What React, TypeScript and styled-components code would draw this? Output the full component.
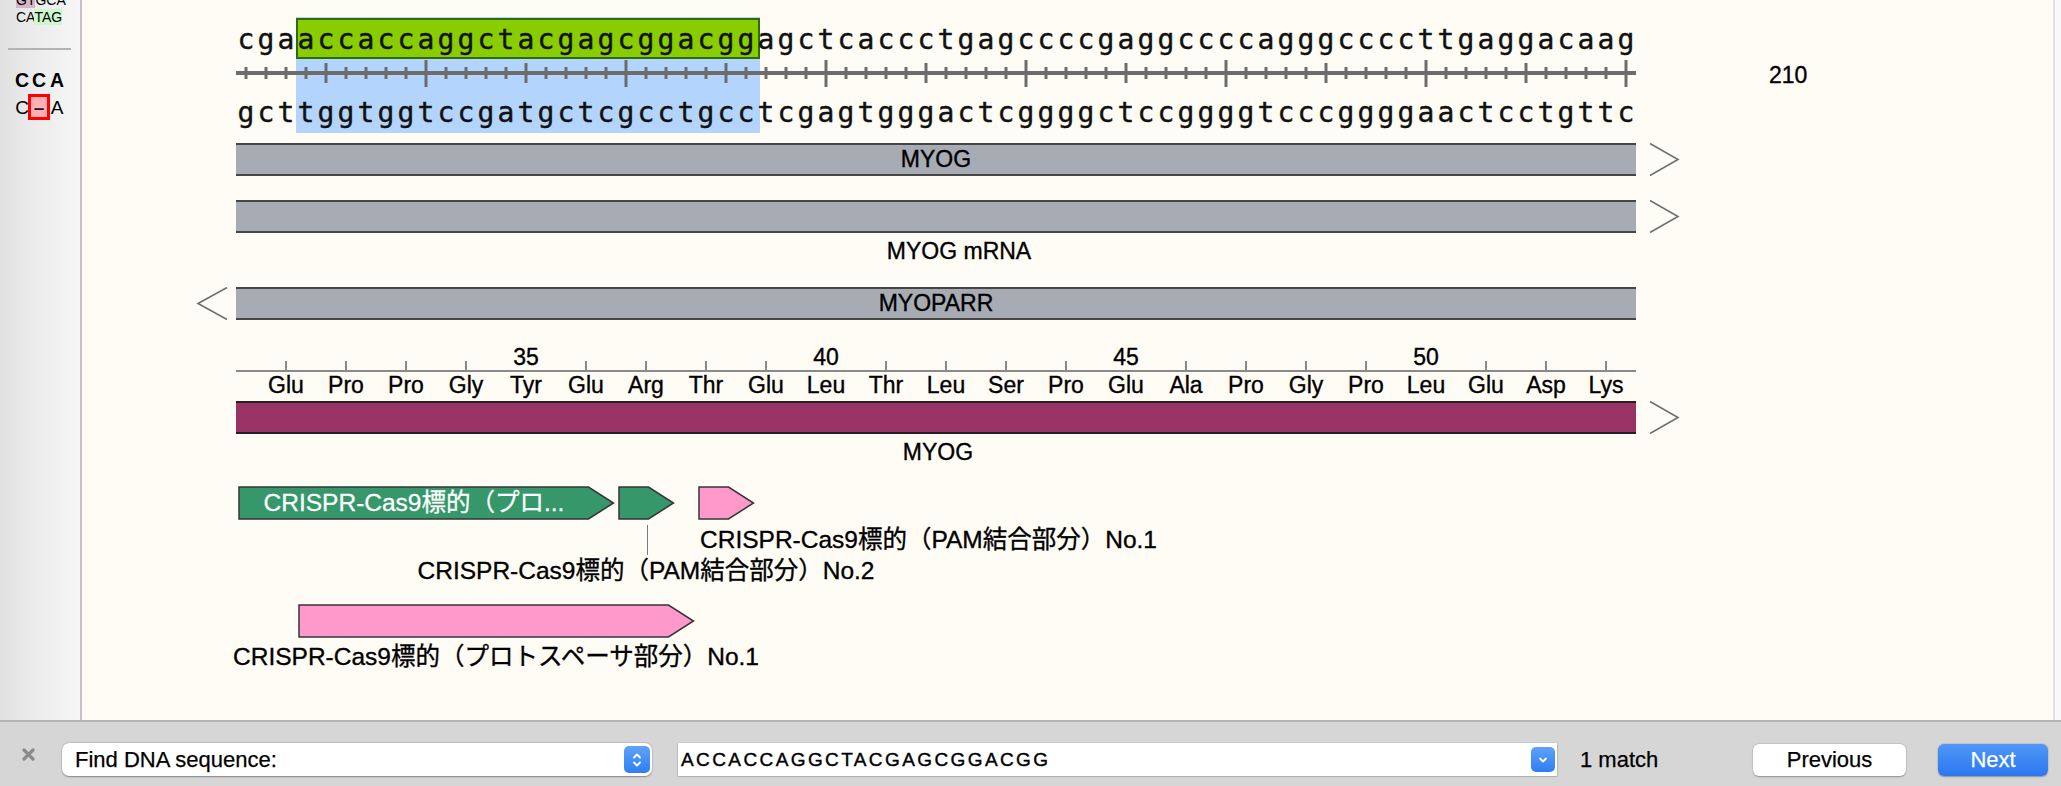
import React from "react";
import styled, { createGlobalStyle } from "styled-components";

const GlobalStyle = createGlobalStyle`
  html, body { margin: 0; padding: 0; overflow: hidden; background: #d6d6d6; }
  body { font-family: "Liberation Sans", Arial, "Noto Sans CJK JP", sans-serif; }
  *, *::before, *::after { box-sizing: border-box; }
`;

const CELL = 20;
const SEQ_TOP = "cgaaccaccaggctacgagcggacggagctcaccctgagccccgaggccccagggccccttgaggacaag";
const COMP: Record<string, string> = { a: "t", t: "a", g: "c", c: "g" };
const SEQ_BOTTOM = SEQ_TOP.split("").map((c) => COMP[c]).join("");
const FIRST_POS = 141;
const MATCH = { start: 3, len: 23 };
const AAS = ["Glu","Pro","Pro","Gly","Tyr","Glu","Arg","Thr","Glu","Leu","Thr","Leu","Ser","Pro","Glu","Ala","Pro","Gly","Pro","Leu","Glu","Asp","Lys"];
const FIRST_AA = 31;
const LABEL_FONT = `"Liberation Sans", Arial, "Noto Sans CJK JP", sans-serif`;

/* ---------- frame ---------- */
const Window = styled.div`
  width: 2061px;
  height: 786px;
  display: grid;
  grid-template-rows: 720px 66px;
  background: #fffcf5;
`;
const Workspace = styled.div`
  display: flex;
  min-height: 0;
  overflow: hidden;
`;

/* ---------- sidebar ---------- */
const Sidebar = styled.aside`
  width: 82px;
  flex: none;
  padding-left: 16px;
  border-right: 2px solid #c3c3c3;
  background: linear-gradient(to right, #e1e1e1 0%, #ececec 45%, #f6f6f6 100%);
  overflow: hidden;
  font-family: "Liberation Sans", Arial, sans-serif;
  color: #000;
`;
const SideSeq = styled.div`
  margin-top: -8px;
  font-size: 14px;
  line-height: 17px;
  white-space: nowrap;
`;
const SideLine = styled.div``;
const Hl = styled.span<{ $c: string }>`
  background: ${(p) => p.$c};
`;
const SideRule = styled.div`
  margin: 22px 0 0 -8px;
  width: 63px;
  height: 2px;
  background: #b3b3b3;
`;
const AlignGrid = styled.div`
  margin-top: 20px;
  display: grid;
  grid-template-columns: 12px 22px 14px;
  grid-template-rows: 22px 26px;
  row-gap: 2px;
`;
const AlignCell = styled.div<{ $bold?: boolean; $gap?: boolean }>`
  display: flex;
  align-items: center;
  justify-content: center;
  font-size: ${(p) => (p.$bold ? "19.5px" : "19px")};
  font-weight: ${(p) => (p.$bold ? 700 : 400)};
  line-height: 1;
  color: #000;
  ${(p) => (p.$gap ? "border: 3px solid #ff0000; background: #ffb0b7; color: #1a1a1a; font-weight: 700;" : "")}
`;

/* ---------- canvas ---------- */
const Canvas = styled.main`
  flex: 1;
  min-width: 0;
  padding-left: 154px;
  display: flex;
  flex-direction: column;
  align-items: flex-start;
  overflow: hidden;
  background: #fffcf5;
  font-family: ${LABEL_FONT};
  font-size: 23px;
  color: #000;
  -webkit-text-stroke: 0.35px currentColor;
`;
const ScrollTrack = styled.div`
  width: 8px;
  flex: none;
  border-left: 2px solid #e2e2e2;
  background: #f8f8f8;
`;

const SeqBlock = styled.section`
  position: relative;
  width: 1400px;
  flex: none;
  margin-top: 23px;
`;
const MatchShade = styled.div<{ $start: number; $len: number }>`
  position: absolute;
  top: -6px;
  height: 116px;
  left: ${(p) => p.$start * CELL}px;
  width: ${(p) => p.$len * CELL + 4}px;
  background: #b3d4fc;
`;
const MatchBox = styled.div<{ $start: number; $len: number }>`
  position: absolute;
  top: -5px;
  height: 41px;
  left: ${(p) => p.$start * CELL}px;
  width: ${(p) => p.$len * CELL + 4}px;
  background: #89cc00;
  border: 2px solid #2e6b0b;
`;
const SeqRow = styled.div`
  position: relative;
  display: flex;
  height: 33px;
`;
const Base = styled.span`
  width: ${CELL}px;
  flex: none;
  text-align: center;
  font-family: "DejaVu Sans Mono", "Liberation Mono", monospace;
  font-size: 28px;
  line-height: 33px;
  color: #111;
  -webkit-text-stroke: 0.4px #111;
`;
const RulerRow = styled.div`
  position: relative;
  display: flex;
  height: 40px;
`;
const RulerSvg = styled.svg`
  flex: none;
  display: block;
`;
const PosLabel = styled.span`
  margin: 6px 0 0 133px;
  font-size: 23px;
  line-height: 26px;
  white-space: nowrap;
`;

const Track = styled.div<{ $mt: number }>`
  display: flex;
  flex: none;
  height: 33px;
  margin-top: ${(p) => p.$mt}px;
  margin-left: -40px;
`;
const ArrowSlot = styled.div<{ $w: number }>`
  width: ${(p) => p.$w}px;
  flex: none;
  display: flex;
`;
const FeatureBar = styled.div<{ $fill: string; $edge: string }>`
  width: 1400px;
  flex: none;
  height: 33px;
  background: ${(p) => p.$fill};
  border-top: 2px solid ${(p) => p.$edge};
  border-bottom: 2px solid ${(p) => p.$edge};
  display: flex;
  align-items: center;
  justify-content: center;
  font-size: 23px;
  line-height: 1;
  color: #000;
`;
const Caption = styled.div<{ $mt: number; $shift?: number }>`
  width: 1400px;
  flex: none;
  margin-top: ${(p) => p.$mt}px;
  padding-left: ${(p) => p.$shift ?? 0}px;
  text-align: center;
  font-size: 23px;
  line-height: 26px;
  white-space: nowrap;
`;

const AaRuler = styled.div`
  width: 1400px;
  flex: none;
  height: 27px;
  margin-top: 25px;
  padding-left: ${CELL}px;
  border-bottom: 2px solid #8a8a8a;
  display: flex;
`;
const AaRow = styled.div`
  width: 1400px;
  flex: none;
  height: 26px;
  padding-left: ${CELL}px;
  display: flex;
`;
const AaCell = styled.div`
  width: ${CELL * 3}px;
  flex: none;
  display: flex;
  justify-content: center;
  align-items: flex-end;
  font-size: 23px;
  line-height: 25px;
  white-space: nowrap;
`;
const AaTick = styled.span`
  width: 2px;
  height: 9px;
  background: #8a8a8a;
`;

const Lane = styled.div`
  flex: none;
  margin-top: 21px;
  display: grid;
  grid-template-columns: repeat(70, ${CELL}px);
  grid-template-rows: 34px 35px 31px 18px 34px 32px;
`;
const ArrowBox = styled.div<{ $from: number; $to: number; $row: number }>`
  grid-column: ${(p) => p.$from + 1} / ${(p) => p.$to + 2};
  grid-row: ${(p) => p.$row};
  position: relative;
  display: flex;
  align-items: center;
  justify-content: center;
  padding: 0 28px 0 4px;
  min-width: 0;
`;
const ArrowShape = styled.svg`
  position: absolute;
  left: 0;
  top: 0;
  overflow: visible;
`;
const ArrowText = styled.span`
  position: relative;
  color: #fff;
  font-size: 24.5px;
  line-height: 1;
  white-space: nowrap;
  -webkit-text-stroke: 0.3px #fff;
`;
const LaneLabel = styled.div<{ $from: number; $to: number; $row: number; $mt: number; $start?: boolean }>`
  grid-column: ${(p) => p.$from + 1} / ${(p) => p.$to + 2};
  grid-row: ${(p) => p.$row};
  min-width: 0;
  margin-top: ${(p) => p.$mt}px;
  padding-left: ${(p) => (p.$start ? 4 : 0)}px;
  display: flex;
  justify-content: ${(p) => (p.$start ? "flex-start" : "center")};
  font-size: 24.5px;
  line-height: 26px;
  height: 26px;
  white-space: nowrap;
  & > span { flex: none; }
`;
const Leader = styled.div<{ $from: number; $to: number; $row: number }>`
  grid-column: ${(p) => p.$from + 1} / ${(p) => p.$to + 2};
  grid-row: ${(p) => p.$row};
  justify-self: center;
  margin: 5px 0 0 3px;
  width: 1px;
  height: 30px;
  background: #7a7a7a;
`;

/* ---------- find bar ---------- */
const FindBar = styled.footer`
  display: flex;
  align-items: center;
  padding: 11px 13px 0 22px;
  border-top: 2px solid #b4b4b4;
  background: #d6d6d6;
  font-family: "Liberation Sans", Arial, sans-serif;
  font-size: 22px;
  color: #000;
  -webkit-text-stroke: 0.25px currentColor;
`;
const CloseGlyph = styled.svg`
  flex: none;
  margin-bottom: 11px;
`;
const PopUp = styled.div`
  margin-left: 27px;
  width: 590px;
  height: 33px;
  flex: none;
  display: flex;
  align-items: center;
  padding: 0 2px 0 13px;
  border-radius: 7px;
  background: #fff;
  box-shadow: 0 0.5px 1.5px rgba(0, 0, 0, 0.35), 0 0 0 0.5px rgba(0, 0, 0, 0.08);
`;
const PopText = styled.span`
  flex: 1;
  white-space: nowrap;
`;
const BlueKnob = styled.span<{ $w: number; $h: number }>`
  width: ${(p) => p.$w}px;
  height: ${(p) => p.$h}px;
  flex: none;
  border-radius: 5px;
  background: linear-gradient(#5ea3f8, #2f7ef2);
  display: flex;
  align-items: center;
  justify-content: center;
`;
const Combo = styled.div`
  margin-left: 26px;
  width: 879px;
  height: 33px;
  flex: none;
  display: flex;
  align-items: center;
  padding: 0 2px 0 3px;
  background: #fff;
  box-shadow: 0 0.5px 1.5px rgba(0, 0, 0, 0.35), 0 0 0 0.5px rgba(0, 0, 0, 0.1);
`;
const ComboText = styled.span`
  flex: 1;
  font-size: 19px;
  letter-spacing: 2.4px;
  white-space: nowrap;
  color: #000;
  -webkit-text-stroke: 0.4px #000;
`;
const MatchCount = styled.span`
  margin-left: 23px;
  white-space: nowrap;
`;
const Button = styled.button<{ $primary?: boolean }>`
  height: 32px;
  flex: none;
  border: none;
  border-radius: 6px;
  font-family: "Liberation Sans", Arial, sans-serif;
  font-size: 22px;
  padding: 0;
  color: ${(p) => (p.$primary ? "#fff" : "#000")};
  -webkit-text-stroke: 0.25px ${(p) => (p.$primary ? "#fff" : "#000")};
  background: ${(p) => (p.$primary ? "linear-gradient(#4f97f8, #2c77f0)" : "#fff")};
  box-shadow: 0 0.5px 1.5px rgba(0, 0, 0, 0.3), 0 0 0 0.5px rgba(0, 0, 0, 0.06);
`;
const PrevButton = styled(Button)`
  margin-left: auto;
  width: 153px;
`;
const NextButton = styled(Button)`
  margin-left: 32px;
  width: 110px;
`;

/* ---------- drawings ---------- */
const RightChevron = () => (
  <svg width={60} height={33}>
    <polyline points="14,0.5 42,16.5 14,32.5" fill="none" stroke="#6e6e6e" strokeWidth={1.6} />
  </svg>
);
const LeftChevron = () => (
  <svg width={40} height={33}>
    <polyline points="31,0.5 2,16.5 31,32.5" fill="none" stroke="#6e6e6e" strokeWidth={1.6} />
  </svg>
);

const Ruler = () => {
  const ticks = SEQ_TOP.split("").map((_, i) => {
    const pos = FIRST_POS + i;
    const [y1, y2] = pos % 10 === 0 ? [4, 31] : pos % 5 === 0 ? [7, 27] : [11, 23];
    return <rect key={i} x={CELL * i + 10 - 1.5} y={y1} width={3} height={y2 - y1} fill="#6c6c6c" />;
  });
  return (
    <RulerSvg width={1400} height={40}>
      <rect x={0} y={15} width={1400} height={4} fill="#6c6c6c" />
      {ticks}
    </RulerSvg>
  );
};

const FeatureArrow = ({
  from, to, row, fill, text,
}: { from: number; to: number; row: number; fill: string; text?: string }) => {
  const w = (to - from + 1) * CELL;
  const pts = `3,1 ${w - 27.5},1 ${w - 2.5},17 ${w - 27.5},33 3,33`;
  return (
    <ArrowBox $from={from} $to={to} $row={row}>
      <ArrowShape width={w} height={34}>
        <polygon points={pts} fill={fill} stroke="#353535" strokeWidth={1.5} />
      </ArrowShape>
      {text && <ArrowText>{text}</ArrowText>}
    </ArrowBox>
  );
};

export default function App() {
  return (
    <>
      <GlobalStyle />
      <Window>
        <Workspace>
          <Sidebar>
            <SideSeq>
              <SideLine><Hl $c="#d8b4c8">GT</Hl>GCA</SideLine>
              <SideLine>CA<Hl $c="#cdf7cd">TAG</Hl></SideLine>
            </SideSeq>
            <SideRule />
            <AlignGrid>
              <AlignCell $bold>C</AlignCell>
              <AlignCell $bold>C</AlignCell>
              <AlignCell $bold>A</AlignCell>
              <AlignCell>C</AlignCell>
              <AlignCell $gap>–</AlignCell>
              <AlignCell>A</AlignCell>
            </AlignGrid>
          </Sidebar>

          <Canvas>
            <SeqBlock>
              <MatchShade $start={MATCH.start} $len={MATCH.len} />
              <MatchBox $start={MATCH.start} $len={MATCH.len} />
              <SeqRow>
                {SEQ_TOP.split("").map((b, i) => <Base key={i}>{b}</Base>)}
              </SeqRow>
              <RulerRow>
                <Ruler />
                <PosLabel>{FIRST_POS + SEQ_TOP.length - 1}</PosLabel>
              </RulerRow>
              <SeqRow>
                {SEQ_BOTTOM.split("").map((b, i) => <Base key={i}>{b}</Base>)}
              </SeqRow>
            </SeqBlock>

            <Track $mt={14}>
              <ArrowSlot $w={40} />
              <FeatureBar $fill="#a7abb3" $edge="#454545">MYOG</FeatureBar>
              <ArrowSlot $w={60}><RightChevron /></ArrowSlot>
            </Track>

            <Track $mt={24}>
              <ArrowSlot $w={40} />
              <FeatureBar $fill="#a7abb3" $edge="#454545" />
              <ArrowSlot $w={60}><RightChevron /></ArrowSlot>
            </Track>
            <Caption $mt={5} $shift={46}>MYOG mRNA</Caption>

            <Track $mt={23}>
              <ArrowSlot $w={40}><LeftChevron /></ArrowSlot>
              <FeatureBar $fill="#a7abb3" $edge="#454545">MYOPARR</FeatureBar>
              <ArrowSlot $w={60} />
            </Track>

            <AaRuler>
              {AAS.map((_, k) => {
                const n = FIRST_AA + k;
                return <AaCell key={k}>{n % 5 === 0 ? n : <AaTick />}</AaCell>;
              })}
            </AaRuler>
            <AaRow>
              {AAS.map((a, k) => <AaCell key={k}>{a}</AaCell>)}
            </AaRow>
            <Track $mt={3}>
              <ArrowSlot $w={40} />
              <FeatureBar $fill="#993366" $edge="#222222" />
              <ArrowSlot $w={60}><RightChevron /></ArrowSlot>
            </Track>
            <Caption $mt={5} $shift={4}>MYOG</Caption>

            <Lane>
              <FeatureArrow from={0} to={18} row={1} fill="#35976a" text="CRISPR-Cas9標的（プロ..." />
              <FeatureArrow from={19} to={21} row={1} fill="#35976a" />
              <FeatureArrow from={23} to={25} row={1} fill="#ff99cc" />
              <Leader $from={19} $to={21} $row={2} />
              <LaneLabel $from={23} $to={25} $row={2} $mt={7} $start>
                <span>CRISPR-Cas9標的（PAM結合部分）No.1</span>
              </LaneLabel>
              <LaneLabel $from={19} $to={21} $row={3} $mt={3}>
                <span>CRISPR-Cas9標的（PAM結合部分）No.2</span>
              </LaneLabel>
              <FeatureArrow from={3} to={22} row={5} fill="#ff99cc" />
              <LaneLabel $from={3} $to={22} $row={6} $mt={6}>
                <span>CRISPR-Cas9標的（プロトスペーサ部分）No.1</span>
              </LaneLabel>
            </Lane>
          </Canvas>
          <ScrollTrack />
        </Workspace>

        <FindBar>
          <CloseGlyph width={13} height={13} viewBox="0 0 13 13">
            <path d="M2 2 L11 11 M11 2 L2 11" stroke="#8b8b8b" strokeWidth={3.2} strokeLinecap="round" />
          </CloseGlyph>
          <PopUp>
            <PopText>Find DNA sequence:</PopText>
            <BlueKnob $w={26} $h={27}>
              <svg width={12} height={18} viewBox="0 0 12 18">
                <path d="M3 6.5 L6 3.5 L9 6.5 M3 11.5 L6 14.5 L9 11.5" fill="none" stroke="#fff" strokeWidth={1.8} strokeLinecap="round" strokeLinejoin="round" />
              </svg>
            </BlueKnob>
          </PopUp>
          <Combo>
            <ComboText>ACCACCAGGCTACGAGCGGACGG</ComboText>
            <BlueKnob $w={24} $h={25}>
              <svg width={12} height={10} viewBox="0 0 12 10">
                <path d="M3 3.5 L6 6.5 L9 3.5" fill="none" stroke="#fff" strokeWidth={1.8} strokeLinecap="round" strokeLinejoin="round" />
              </svg>
            </BlueKnob>
          </Combo>
          <MatchCount>1 match</MatchCount>
          <PrevButton>Previous</PrevButton>
          <NextButton $primary>Next</NextButton>
        </FindBar>
      </Window>
    </>
  );
}
